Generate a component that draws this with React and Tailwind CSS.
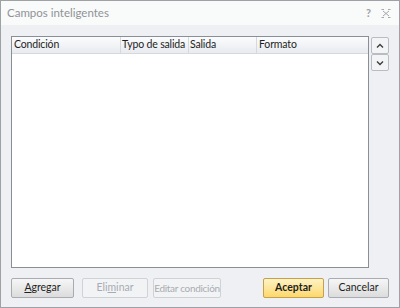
const font = { fontFamily: 'Lato, "Liberation Sans", sans-serif' }

function Btn({ children, className = '', disabled, primary }) {
  const base = primary
    ? 'border-[#c4a14a] bg-gradient-to-b from-[#fff3c4] to-[#fcd86a] text-[#1e1e1e] font-bold'
    : disabled
      ? 'border-[#cfd3d8] bg-[#f2f3f5] text-[#a8acb2]'
      : 'border-[#a8acb2] bg-gradient-to-b from-[#f6f6f6] to-[#dcdcdc] text-[#1e1e1e]'
  return (
    <div className={`h-[20px] flex items-center justify-center whitespace-nowrap rounded-[2px] border ${base} ${className}`}>
      {children}
    </div>
  )
}

function Arrow({ up }) {
  return (
    <div className="w-[18px] h-[17px] flex items-center justify-center border border-[#b9bcc1] rounded-[2px] bg-[#f3f4f6]">
      <svg width="8" height="6" viewBox="0 0 8 6">
        <path d={up ? 'M1 4.5 L4 1.5 L7 4.5' : 'M1 1.5 L4 4.5 L7 1.5'} fill="none" stroke="#3c3c3c" strokeWidth="1.4" />
      </svg>
    </div>
  )
}

export default function App() {
  return (
    <div className="w-[400px] h-[308px] border border-[#9ea1a6] bg-[#eef0f3] flex flex-col" style={font}>
      {/* Title bar */}
      <div className="h-[24px] bg-[#f9fafa] flex items-center pl-[6px] pr-[8px] shrink-0">
        <span className="text-[11.5px] text-[#909297] flex-1">Campos inteligentes</span>
        <span className="text-[11px] text-[#9ea1a6] font-bold mr-[10px]">?</span>
        <svg width="10" height="9" viewBox="0 0 10 9">
          <path d="M0.5 0.5 H3 M7 0.5 H9.5 M0.5 8.5 H3 M7 8.5 H9.5 M2 2 L8 7 M8 2 L2 7" stroke="#a5a8ad" strokeWidth="1" fill="none" />
        </svg>
      </div>

      {/* Body */}
      <div className="flex-1 flex flex-col px-[10px] pt-[11px] pb-[9px]">
        <div className="flex-1 flex gap-[2px]">
          <div className="flex-1 border border-[#8a8f96] bg-white flex flex-col">
            <div className="h-[17px] flex text-[10.5px] tracking-[-0.15px] text-[#1e1e1e] whitespace-nowrap bg-gradient-to-b from-[#fbfcfd] to-[#e8ebef] border-b border-[#d5d8dc]">
              <div className="w-[109px] pl-[2px] overflow-hidden border-r border-[#d5d8dc] flex items-center">Condición</div>
              <div className="w-[68px] pl-[1px] overflow-hidden border-r border-[#d5d8dc] flex items-center">Typo de salida</div>
              <div className="w-[68px] pl-[1px] overflow-hidden border-r border-[#d5d8dc] flex items-center">Salida</div>
              <div className="flex-1 pl-[2px] flex items-center">Formato</div>
            </div>
          </div>
          <div className="flex flex-col pt-[1px]">
            <Arrow up />
            <Arrow />
          </div>
        </div>

        <div className="h-[20px] mt-[10px] flex text-[10.5px]">
          <Btn className="w-[63px]"><span><span className="underline">A</span>gregar</span></Btn>
          <Btn disabled className="w-[66px] ml-[8px]"><span>Eli<span className="underline">m</span>inar</span></Btn>
          <Btn disabled className="w-[68px] ml-[5px] text-[10px] tracking-[-0.3px]">Editar condición</Btn>
          <div className="flex-1" />
          <Btn primary className="w-[61px]">Aceptar</Btn>
          <Btn className="w-[61px] ml-[4px]">Cancelar</Btn>
        </div>
      </div>
    </div>
  )
}
